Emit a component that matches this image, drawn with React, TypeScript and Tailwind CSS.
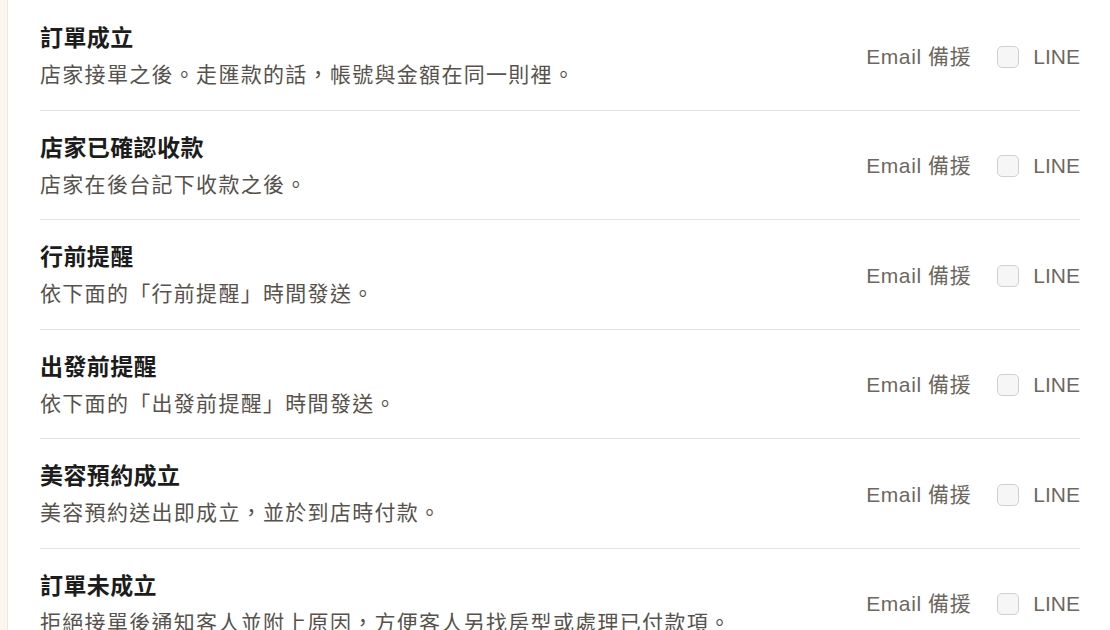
const rows = [
  { title: "訂單成立", desc: "店家接單之後。走匯款的話，帳號與金額在同一則裡。" },
  { title: "店家已確認收款", desc: "店家在後台記下收款之後。" },
  { title: "行前提醒", desc: "依下面的「行前提醒」時間發送。" },
  { title: "出發前提醒", desc: "依下面的「出發前提醒」時間發送。" },
  { title: "美容預約成立", desc: "美容預約送出即成立，並於到店時付款。" },
  { title: "訂單未成立", desc: "拒絕接單後通知客人並附上原因，方便客人另找房型或處理已付款項。" },
];

function NotifyRow({ title, desc }: { title: string; desc: string }) {
  return (
    <div className="flex items-center justify-between border-b border-[#e5e3e0] pt-[22px] pb-[19.5px]">
      <div className="flex flex-col gap-[7px]">
        <div className="text-[23px] leading-[30px] font-bold tracking-[0.4px] text-[#1c1c1c]">{title}</div>
        <div className="whitespace-nowrap text-[21px] leading-[30px] tracking-[1.3px] text-[#57524d]">{desc}</div>
      </div>
      <div className="flex items-center text-[21px] text-[#6e675f]">
        <span className="tracking-[0.6px]">Email 備援</span>
        <span className="ml-[26px] h-[22px] w-[22px] rounded-[5px] border border-[#d2cfcc] bg-[#f6f6f6]" />
        <span className="ml-[14px]">LINE</span>
      </div>
    </div>
  );
}

export default function App() {
  return (
    <div
      className="flex h-[630px] w-[1110px] overflow-hidden bg-white"
      style={{ fontFamily: '"Liberation Sans", "Noto Sans CJK TC", sans-serif' }}
    >
      <div className="w-2 shrink-0 border-r border-[#efe6dc] bg-[#fcf6f0]" />
      <div className="flex-1 pl-8 pr-[30px] pt-px">
        {rows.map((r) => (
          <NotifyRow key={r.title} title={r.title} desc={r.desc} />
        ))}
      </div>
    </div>
  );
}
